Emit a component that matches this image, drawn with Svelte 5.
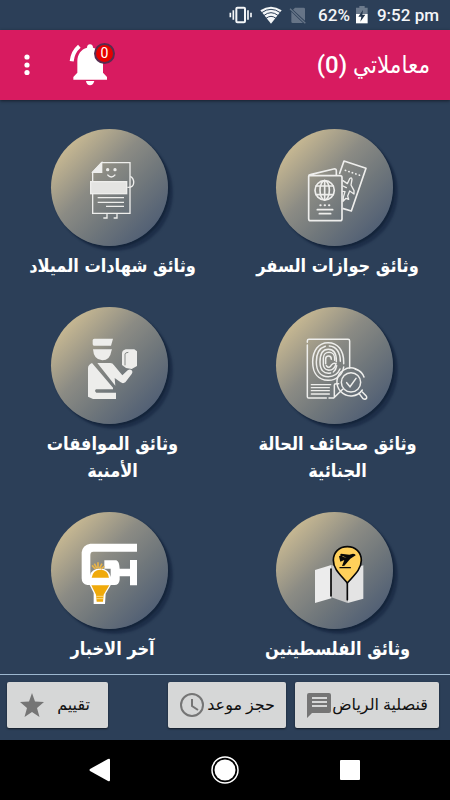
<script>
  const services = [
    { id: 'passport', label: 'وثائق جوازات السفر' },
    { id: 'birth', label: 'وثائق شهادات الميلاد' },
    { id: 'criminal', label: 'وثائق صحائف الحالة الجنائية' },
    { id: 'security', label: 'وثائق الموافقات الأمنية' },
    { id: 'palestine', label: 'وثائق الفلسطينين' },
    { id: 'news', label: 'آخر الاخبار' }
  ];
  let count = $state(0);
</script>

<div class="screen" dir="rtl">
  <div class="status" dir="ltr">
    <svg width="24" height="20" viewBox="0 0 72 60" fill="none" stroke="#f4f6f8" aria-hidden="true">
      <rect x="22" y="8" width="26" height="44" rx="3" stroke-width="6" />
      <path d="M13 16v28M57 16v28" stroke-width="5" />
      <path d="M4 23v14M66 23v14" stroke-width="5" />
    </svg>
    <svg class="wifi" width="22" height="20" viewBox="0 0 66 60" aria-hidden="true">
      <path d="M33 56 1 16Q33-6 65 16Z" fill="#f4f6f8" />
      <path d="M5 23Q33 3 61 23M11 32Q33 14 55 32M18 40Q33 28 48 40" fill="none" stroke="#2c3f58" stroke-width="3" />
    </svg>
    <svg class="sim" width="18" height="20" viewBox="0 0 54 60" aria-hidden="true">
      <path d="M18 8H44q4 0 4 4V47L12 14Z M7 20 42 54H11q-4 0-4-4Z" fill="#667487" />
      <path d="M3 11 49 55" stroke="#667487" stroke-width="4" />
    </svg>
    <span class="pct">62%</span>
    <svg width="14" height="20" viewBox="0 0 42 60" aria-hidden="true">
      <path d="M13 3h16v5h9v20H3V8h10Z" fill="#6c7a8c" />
      <path d="M3 27h35v28H3Z" fill="#fff" />
      <path d="M24 15 10 35h9l-3 15 15-21h-9Z" fill="#24364d" />
    </svg>
    <span class="time">9:52 pm</span>
  </div>

  <header>
    <h1>معاملاتي ({count})</h1>
    <button class="bell" aria-label="الإشعارات">
      <svg width="40" height="44" viewBox="0 0 120 132" fill="#fff" aria-hidden="true">
        <path d="M63 4c6 0 9 4 9 10 18 5 30 20 30 40v35l12 13v8H13v-8l12-13V54c0-20 11-35 29-40 0-6 3-10 9-10Z" />
        <path d="M51 114h25c-2 8-7 13-13 13s-11-5-12-13Z" />
        <path d="M31 10Q11 27 8 55" fill="none" stroke="#fff" stroke-width="12" />
      </svg>
      <span class="badge">{count}</span>
    </button>
    <button class="more" aria-label="المزيد">
      <svg width="8" height="24" viewBox="0 0 8 24" fill="#fff" aria-hidden="true">
        <circle cx="4" cy="4" r="2.600" /><circle cx="4" cy="12" r="2.600" /><circle cx="4" cy="19.500" r="2.600" />
      </svg>
    </button>
  </header>

  <main>
    {#each services as s (s.id)}
      <button class="tile">
        <span class="disc">
          {#if s.id === 'passport'}
            <svg viewBox="153 42 351 351" fill="none" stroke="#eeeeec" stroke-width="5" stroke-linejoin="round" stroke-linecap="round" aria-hidden="true">
              <path d="M252 182H345q6 0 6 6V311q0 6-6 6H257q-6 0-6-6V184q0-4 5-5l70-17q8-2 8 6v13" />
              <circle cx="299" cy="226" r="29" />
              <ellipse cx="299" cy="226" rx="14" ry="29" />
              <path d="M299 197v58M273 213h52M273 239h52" />
              <path d="M277 284h46M283 296h34" />
              <path d="M286 271h1M299 271h1M312 271h1" stroke-width="6" />
              <path d="M344 175 357 138 423 160 379 288 355 281" />
              <path d="m361 166 44 15" stroke-width="5" stroke-dasharray="1 10" />
              <path d="M354 197 367 206 374 191q6-6 7 2l-3 17 9 17v10l-13-9-6 15 3 10-8-3-9 9 1-12 5-17-7-1M354 213l10 5" stroke-width="4" />
            </svg>
          {:else if s.id === 'birth'}
            <svg viewBox="153 42 351 351" fill="none" stroke="#eeeeec" stroke-width="4" aria-hidden="true">
              <path d="M278 200V171L305 143H390V295H278V235" />
              <path d="M278 172 305 143V172Z" fill="#eeeeec" />
              <rect x="272" y="200" width="108" height="36" fill="#e4e4e2" />
              <circle cx="323" cy="164" r="3" fill="#eeeeec" /><circle cx="345" cy="164" r="3" fill="#eeeeec" />
              <path d="M322 179q12 14 24 0" />
              <path d="M391 184q11 6 10 20t-19 13" />
              <path d="M293 248h79M293 262h79M318 274h54" />
              <path d="M321 297v12h-11M351 297v12h-10" />
            </svg>
          {:else if s.id === 'criminal'}
            <svg viewBox="153 36 351 351" fill="none" stroke="#eeeeec" stroke-width="4.5" stroke-linecap="round" aria-hidden="true">
              <path d="M247 142v-4q0-5 5-5H369q5 0 5 5v81M247 150V305q0 4 4 4h53M312 309h14l27-26M328 307V270q0-4 5-4h8" />
              <path d="M356 216C353 238 335 257 309 256 280 255 263 235 263 201c0-35 18-58 46-58 30 0 47 23 47 58v5" />
              <path d="M345 222c-6 14-18 23-35 23-23 0-36-17-36-44 0-25 10-42 27-47M313 153c21 1 33 20 33 46" />
              <path d="M317 234c-22 4-32-10-32-33 0-24 8-38 25-38 16 0 24 13 24 34v3M335 212q-2 13-10 19" />
              <path d="M329 196v-6c0-24-34-24-34 0v20q2 13 14 15M302 206v-14q0-9 9-9 8 0 8 10" />
              <path d="M304 212q9 11 16-3 6-6 13-3-4 20-22 20" />
              <path d="M259 269h58M259 278h54M259 287h54M259 297h54" stroke-width="4" />
              <circle cx="378" cy="262" r="29" />
              <path d="M417 246a42 42 0 1 0-5 39M411 235a42 42 0 0 0-21-13" />
              <path d="m365 263 10 12 18-25M402 295l12 16q7 4 11-2 1-3-2-7l-11-11" />
            </svg>
          {:else if s.id === 'security'}
            <svg viewBox="153 36 351 351" fill="#ededeb" aria-hidden="true">
              <path d="M278 136q0-5 5-5h56l-6 21q-27 1-51 0-4 0-4-5ZM279 163h57l-2 6q-4 27-27 27-26-1-28-33Z" />
              <path d="M276 204 339 278V283H288q-6 5 1 10h59v19H279l-15-7V220q0-11 12-16Z" />
              <path d="M292 204h39q7 0 11 7l25 30 16-15q7-5 12 0 5 5 0 11l-19 25q-7 5-14 0l-18-13 2 23Z" />
              <path d="M377 163h26l8 6v44l-16 9-17-3-12-9v-35q0-9 11-12Z" />
              <path d="M375 211v-34q0-4 10-5" fill="none" stroke="#858987" stroke-width="3" />
            </svg>
          {:else if s.id === 'palestine'}
            <svg viewBox="153 36 351 351" aria-hidden="true">
              <path d="M270 210 319 195V295L270 309Z" fill="#ececec" />
              <path d="M319 195 368 210V309L319 292Z" fill="#c8c8c8" />
              <path d="M368 210 415 196V296L368 309Z" fill="#e4e4e4" />
              <path d="M318 207v81M367 250v49" stroke="#080808" stroke-width="5" stroke-linecap="round" />
              <path d="M367 249C344 222 325 206 325 181c0-25 18-41 42-41s42 16 42 41c0 26-20 43-42 68Z" fill="#ffd05b" stroke="#080808" stroke-width="5" />
              <path d="m342 169 6-3 7 5 10 2-20-8 3-4 25 3 11-3q8 0 8 5l-16 10-18 21-7 1 7-18-12 5Z" fill="#080808" />
              <path d="M345 203h31" stroke="#080808" stroke-width="4" stroke-linecap="round" />
            </svg>
          {:else}
            <svg viewBox="153 36 351 351" aria-hidden="true">
              <path d="M411 131V155H280q-9 0-9 10v67h61V206H313V181H349q9 3 10 25h31V180h21v76H390V229H359v10q-2 16-15 16H262q-17-3-17-20V157q3-23 26-26Z" fill="#fff" />
              <path d="M270 227q4-20 31-22 25 2 32 26l-1 25-15 25-2 31H281V279l-13-26Z" fill="#fff" />
              <path d="M275 233q4-24 26-24 23 0 26 24ZM274 256h54l-17 28-2 21H290l-2-21Z" fill="#f0aa0b" />
              <path d="M276 196l10 11M283 191l8 15M294 187v18M306 191l-8 15M313 199l-10 8" stroke="#e9b449" stroke-width="5" />
              <path d="M289 289h22M289 296h22" stroke="#fff1c5" stroke-width="2" />
            </svg>
          {/if}
        </span>
        <span class="label">{s.label}</span>
      </button>
    {/each}
  </main>

  <footer>
    <button class="action consulate">
      <span>قنصلية الرياض</span>
      <svg width="26" height="26" viewBox="0 0 26 26" aria-hidden="true">
        <path d="M3 1h20q2 0 2 2v16q0 2-2 2H6l-5 5V3q0-2 2-2Z" fill="#757575" />
        <path d="M6 6h15M6 10h15M6 14h15" stroke="#d6d7d7" stroke-width="2" />
      </svg>
    </button>
    <button class="action booking">
      <span>حجز موعد</span>
      <svg width="26" height="26" viewBox="0 0 26 26" fill="none" stroke="#757575" stroke-width="2" aria-hidden="true">
        <circle cx="13" cy="13" r="11" /><path d="M13 7v7l6 4" />
      </svg>
    </button>
    <button class="action rate">
      <span>تقييم</span>
      <svg width="26" height="26" viewBox="0 0 26 26" fill="#757575" aria-hidden="true">
        <path d="m13 1 3 8.500 9 .5-7 6 2.500 9L13 20l-7.500 5L8 16 1 10l9-.5Z" />
      </svg>
    </button>
  </footer>

  <nav dir="ltr">
    <button aria-label="رجوع"><svg width="28" height="28" viewBox="0 0 28 28" aria-hidden="true"><path d="M4 13 22 3q2-1 2 1v20q0 2-2 1L4 15q-1-1 0-2Z" fill="#fff" /></svg></button>
    <button aria-label="الرئيسية"><svg width="28" height="28" viewBox="0 0 28 28" aria-hidden="true"><circle cx="14" cy="14" r="13" fill="none" stroke="#fff" stroke-width="1.500" /><circle cx="14" cy="14" r="10.500" fill="#fff" /></svg></button>
    <button aria-label="التطبيقات"><svg width="28" height="28" viewBox="0 0 28 28" aria-hidden="true"><rect x="4" y="4" width="20" height="20" rx="1" fill="#fff" /></svg></button>
  </nav>
</div>

<style>
  :global(body) {
    margin: 0;
    background: #2c3f58;
  }
  button {
    margin: 0;
    padding: 0;
    border: 0;
    background: none;
    color: inherit;
    font: inherit;
    cursor: pointer;
  }
  svg {
    display: block;
    flex: none;
  }
  .screen {
    display: flex;
    flex-direction: column;
    min-height: 100vh;
    background: #2c3f58;
    color: #fff;
    font-family: Roboto, "DejaVu Sans", sans-serif;
  }
  .status {
    display: flex;
    align-items: center;
    justify-content: flex-end;
    height: 30px;
    padding-right: 11px;
    font-size: 17px;
    font-weight: 500;
    color: #f4f6f8;
  }
  .wifi,
  .sim {
    margin-left: 7px;
  }
  .pct {
    margin: 0 5px 0 11px;
  }
  .time {
    margin-left: 8px;
  }
  header {
    display: flex;
    align-items: center;
    height: 70px;
    padding: 0 20px 0 23px;
    background: #d81b60;
    box-shadow: 0 1px 3px rgba(0, 0, 0, 0.5);
  }
  h1 {
    margin: 0 0 0 auto;
    font-family: Roboto, "DejaVu Sans Condensed", "DejaVu Sans", sans-serif;
    font-size: 24px;
    font-weight: 500;
    line-height: 32px;
  }
  .bell {
    position: relative;
    margin-left: 38px;
  }
  .badge {
    position: absolute;
    top: 0;
    right: -6px;
    box-sizing: border-box;
    width: 21px;
    height: 21px;
    border: 2px solid #582c50;
    border-radius: 50%;
    background: #e60000;
    font-size: 14px;
    line-height: 17px;
    text-align: center;
  }
  main {
    flex: 1;
    display: grid;
    grid-template-columns: 1fr 1fr;
    align-content: start;
    row-gap: 28px;
    padding: 29px 0 8px;
  }
  .tile {
    display: flex;
    flex-direction: column;
    align-items: center;
    gap: 6px;
  }
  .disc {
    width: 117px;
    height: 117px;
    margin-right: 7px;
    border-radius: 50%;
    background: linear-gradient(135deg, #cbbb93 12%, #8b8b84 42%, #70777b 62%, #4a5a73 92%);
    box-shadow: 2px 2px 2px #14243a, 5px 5px 2px #1f304a;
  }
  .disc svg {
    width: 100%;
    height: 100%;
  }
  .label {
    max-width: 180px;
    font-family: "DejaVu Sans Condensed", "DejaVu Sans", sans-serif;
    font-size: 18px;
    font-weight: 700;
    line-height: 27px;
    text-align: center;
  }
  footer {
    display: flex;
    align-items: center;
    box-sizing: border-box;
    height: 66px;
    padding: 0 11px 6px 7px;
    border-top: 1px solid #9db7cf;
  }
  .action {
    display: flex;
    align-items: center;
    justify-content: space-between;
    box-sizing: border-box;
    height: 46px;
    padding: 0 11px;
    border-radius: 2px;
    background: #d6d7d7;
    box-shadow: 0 1px 2px rgba(0, 0, 0, 0.6);
    color: #111;
    font-size: 16px;
    white-space: nowrap;
  }
  .consulate {
    flex: 0 0 144px;
  }
  .booking {
    flex: 0 0 118px;
    margin-right: 9px;
  }
  .rate {
    flex: 0 0 101px;
    margin-right: auto;
    padding: 0 18px 0 12px;
  }
  nav {
    display: flex;
    align-items: center;
    justify-content: center;
    gap: 97px;
    height: 60px;
    background: #000;
  }
</style>
